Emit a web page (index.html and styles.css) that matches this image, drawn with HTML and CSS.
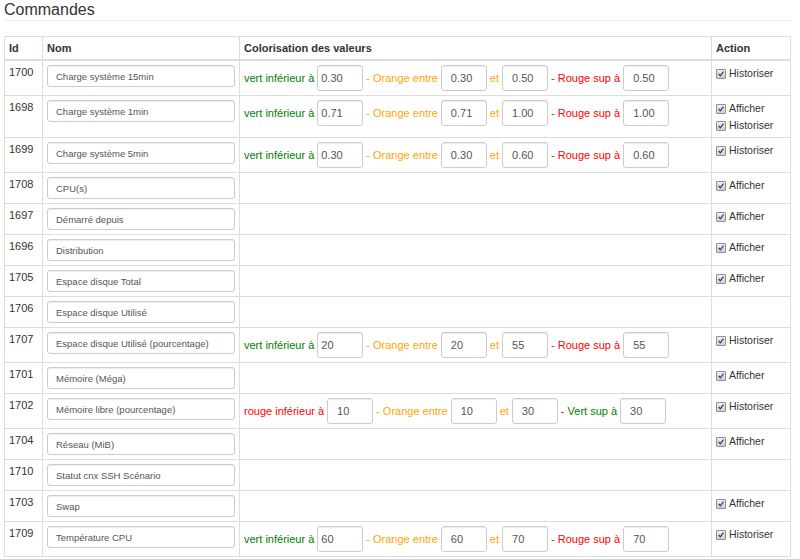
FILE: index.html
```html
<!DOCTYPE html>
<html lang="fr">
<head>
<meta charset="utf-8">
<title>Commandes</title>
<link rel="stylesheet" href="styles.css">
</head>
<body>
<div class="page">
  <h3 class="title">Commandes</h3>
  <table class="cmds">
    <colgroup>
      <col class="c-id"><col class="c-nom"><col class="c-col"><col class="c-act">
    </colgroup>
    <thead>
      <tr><th>Id</th><th>Nom</th><th>Colorisation des valeurs</th><th>Action</th></tr>
    </thead>
    <tbody>
      <tr>
        <td class="id">1700</td>
        <td><input class="name" value="Charge système 15min"></td>
        <td><div class="colo"><span class="g">vert inférieur à</span><input class="v first" value="0.30"><span class="o">- Orange entre</span><input class="v" value="0.30"><span class="o">et</span><input class="v" value="0.50"><span class="r"><span class="g">-</span> Rouge sup à</span><input class="v" value="0.50"></div></td>
        <td class="act"><div class="chk"><span class="box"><svg viewBox="0 0 10 10"><path d="M2.3 5.2 L4.2 7.4 L7.8 2.4"/></svg></span>Historiser</div></td>
      </tr>
      <tr>
        <td class="id">1698</td>
        <td><input class="name" value="Charge système 1min"></td>
        <td><div class="colo"><span class="g">vert inférieur à</span><input class="v first" value="0.71"><span class="o">- Orange entre</span><input class="v" value="0.71"><span class="o">et</span><input class="v" value="1.00"><span class="r"><span class="g">-</span> Rouge sup à</span><input class="v" value="1.00"></div></td>
        <td class="act"><div class="chk"><span class="box"><svg viewBox="0 0 10 10"><path d="M2.3 5.2 L4.2 7.4 L7.8 2.4"/></svg></span>Afficher</div><div class="chk"><span class="box"><svg viewBox="0 0 10 10"><path d="M2.3 5.2 L4.2 7.4 L7.8 2.4"/></svg></span>Historiser</div></td>
      </tr>
      <tr>
        <td class="id">1699</td>
        <td><input class="name" value="Charge système 5min"></td>
        <td><div class="colo"><span class="g">vert inférieur à</span><input class="v first" value="0.30"><span class="o">- Orange entre</span><input class="v" value="0.30"><span class="o">et</span><input class="v" value="0.60"><span class="r"><span class="g">-</span> Rouge sup à</span><input class="v" value="0.60"></div></td>
        <td class="act"><div class="chk"><span class="box"><svg viewBox="0 0 10 10"><path d="M2.3 5.2 L4.2 7.4 L7.8 2.4"/></svg></span>Historiser</div></td>
      </tr>
      <tr>
        <td class="id">1708</td>
        <td><input class="name" value="CPU(s)"></td>
        <td></td>
        <td class="act"><div class="chk"><span class="box"><svg viewBox="0 0 10 10"><path d="M2.3 5.2 L4.2 7.4 L7.8 2.4"/></svg></span>Afficher</div></td>
      </tr>
      <tr>
        <td class="id">1697</td>
        <td><input class="name" value="Démarré depuis"></td>
        <td></td>
        <td class="act"><div class="chk"><span class="box"><svg viewBox="0 0 10 10"><path d="M2.3 5.2 L4.2 7.4 L7.8 2.4"/></svg></span>Afficher</div></td>
      </tr>
      <tr>
        <td class="id">1696</td>
        <td><input class="name" value="Distribution"></td>
        <td></td>
        <td class="act"><div class="chk"><span class="box"><svg viewBox="0 0 10 10"><path d="M2.3 5.2 L4.2 7.4 L7.8 2.4"/></svg></span>Afficher</div></td>
      </tr>
      <tr>
        <td class="id">1705</td>
        <td><input class="name" value="Espace disque Total"></td>
        <td></td>
        <td class="act"><div class="chk"><span class="box"><svg viewBox="0 0 10 10"><path d="M2.3 5.2 L4.2 7.4 L7.8 2.4"/></svg></span>Afficher</div></td>
      </tr>
      <tr>
        <td class="id">1706</td>
        <td><input class="name" value="Espace disque Utilisé"></td>
        <td></td>
        <td class="act"></td>
      </tr>
      <tr>
        <td class="id">1707</td>
        <td><input class="name" value="Espace disque Utilisé (pourcentage)"></td>
        <td><div class="colo"><span class="g">vert inférieur à</span><input class="v first" value="20"><span class="o">- Orange entre</span><input class="v" value="20"><span class="o">et</span><input class="v" value="55"><span class="r"><span class="g">-</span> Rouge sup à</span><input class="v" value="55"></div></td>
        <td class="act"><div class="chk"><span class="box"><svg viewBox="0 0 10 10"><path d="M2.3 5.2 L4.2 7.4 L7.8 2.4"/></svg></span>Historiser</div></td>
      </tr>
      <tr>
        <td class="id">1701</td>
        <td><input class="name" value="Mémoire (Méga)"></td>
        <td></td>
        <td class="act"><div class="chk"><span class="box"><svg viewBox="0 0 10 10"><path d="M2.3 5.2 L4.2 7.4 L7.8 2.4"/></svg></span>Afficher</div></td>
      </tr>
      <tr>
        <td class="id">1702</td>
        <td><input class="name" value="Mémoire libre (pourcentage)"></td>
        <td><div class="colo"><span class="r">rouge inférieur à</span><input class="v" value="10"><span class="o">- Orange entre</span><input class="v" value="10"><span class="o">et</span><input class="v" value="30"><span class="g"><span class="r">-</span> Vert sup à</span><input class="v" value="30"></div></td>
        <td class="act"><div class="chk"><span class="box"><svg viewBox="0 0 10 10"><path d="M2.3 5.2 L4.2 7.4 L7.8 2.4"/></svg></span>Historiser</div></td>
      </tr>
      <tr>
        <td class="id">1704</td>
        <td><input class="name" value="Réseau (MiB)"></td>
        <td></td>
        <td class="act"><div class="chk"><span class="box"><svg viewBox="0 0 10 10"><path d="M2.3 5.2 L4.2 7.4 L7.8 2.4"/></svg></span>Afficher</div></td>
      </tr>
      <tr>
        <td class="id">1710</td>
        <td><input class="name" value="Statut cnx SSH Scénario"></td>
        <td></td>
        <td class="act"></td>
      </tr>
      <tr>
        <td class="id">1703</td>
        <td><input class="name" value="Swap"></td>
        <td></td>
        <td class="act"><div class="chk"><span class="box"><svg viewBox="0 0 10 10"><path d="M2.3 5.2 L4.2 7.4 L7.8 2.4"/></svg></span>Afficher</div></td>
      </tr>
      <tr>
        <td class="id">1709</td>
        <td><input class="name" value="Température CPU"></td>
        <td><div class="colo"><span class="g">vert inférieur à</span><input class="v first" value="60"><span class="o">- Orange entre</span><input class="v" value="60"><span class="o">et</span><input class="v" value="70"><span class="r"><span class="g">-</span> Rouge sup à</span><input class="v" value="70"></div></td>
        <td class="act"><div class="chk"><span class="box"><svg viewBox="0 0 10 10"><path d="M2.3 5.2 L4.2 7.4 L7.8 2.4"/></svg></span>Historiser</div></td>
      </tr>
    </tbody>
  </table>
</div>
</body>
</html>
```
FILE: styles.css
```css
html, body {
  margin: 0;
  padding: 0;
  background: #fff;
}
body {
  font-family: "Liberation Sans", Arial, sans-serif;
  font-size: 11px;
  color: #333;
}
.page {
  width: 786px;
  margin: 0 0 0 4px;
}
.title {
  margin: 0 0 15px 0;
  padding: 1px 0 1px 0;
  font-size: 16px;
  line-height: 18px;
  font-weight: normal;
  color: #333;
  border-bottom: 1px solid #eee;
}
.cmds {
  width: 786px;
  table-layout: fixed;
  border-collapse: collapse;
  border: 1px solid #ddd;
}
.c-id { width: 38px; }
.c-nom { width: 197px; }
.c-col { width: 472px; }
.c-act { width: 79px; }
.cmds th {
  text-align: left;
  font-weight: bold;
  font-size: 11px;
  line-height: 14px;
  padding: 4px 4px;
  border: 1px solid #ddd;
  border-bottom: 2px solid #ddd;
  color: #333;
}
.cmds td {
  border: 1px solid #ddd;
  padding: 4px;
  vertical-align: top;
  line-height: 14px;
}
.cmds td.id {
  padding-left: 4px;
}
.name {
  display: block;
  box-sizing: border-box;
  width: 100%;
  height: 22px;
  margin: 0;
  padding: 0 8px;
  border: 1px solid #ccc;
  border-radius: 3px;
  box-shadow: inset 0 1px 1px rgba(0,0,0,0.075);
  font-family: "Liberation Sans", Arial, sans-serif;
  font-size: 9.5px;
  color: #555;
  background: #fff;
}
.colo {
  display: flex;
  align-items: center;
  gap: 3px;
  height: 26px;
  white-space: nowrap;
}
.v {
  box-sizing: border-box;
  width: 46px;
  height: 26px;
  margin: 0;
  padding: 0 0 0 9px;
  border: 1px solid #ccc;
  border-radius: 3px;
  box-shadow: inset 0 1px 1px rgba(0,0,0,0.075);
  font-family: "Liberation Sans", Arial, sans-serif;
  font-size: 11px;
  color: #555;
  background: #fff;
}
.v.first {
  padding-left: 3px;
}
.g { color: green; }
.o { color: orange; }
.r { color: red; }
.cmds td.act {
  padding: 4px 4px 3px 4px;
  line-height: 17px;
}
.chk {
  display: flex;
  align-items: center;
  gap: 3px;
  height: 17px;
  font-size: 10.5px;
  color: #333;
}
.box {
  display: block;
  box-sizing: border-box;
  width: 10px;
  height: 10px;
  border: 1px solid #8e8f8f;
  border-radius: 1px;
  background: linear-gradient(#f0f0f0, #cfd0d3);
}
.box svg {
  display: block;
  width: 8px;
  height: 8px;
}
.box path {
  fill: none;
  stroke: #26418f;
  stroke-width: 1.6;
  stroke-linecap: round;
  stroke-linejoin: round;
}
```
